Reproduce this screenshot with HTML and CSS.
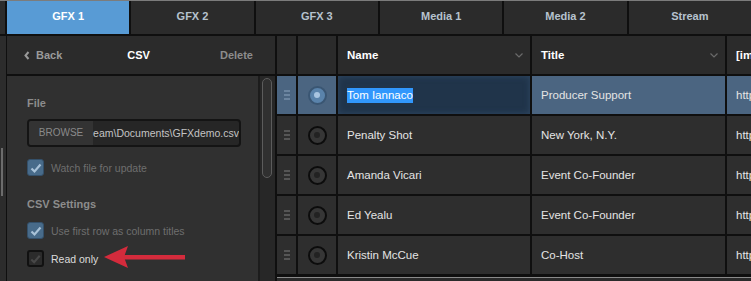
FILE: index.html
```html
<!DOCTYPE html>
<html lang="en">
<head>
    <meta charset="UTF-8">
    <meta name="viewport" content="width=device-width, initial-scale=1.0">
    <title>GFX - CSV</title>
    <link rel="stylesheet" href="styles.css">
</head>
<body>
    <div class="tabs">
        <div class="tab-strip"></div>
        <div class="tab active">GFX 1</div>
        <div class="tab">GFX 2</div>
        <div class="tab">GFX 3</div>
        <div class="tab">Media 1</div>
        <div class="tab">Media 2</div>
        <div class="tab">Stream</div>
    </div>

    <div class="main">
        <div class="strip"><div class="grip"></div></div>

        <div class="side">
            <div class="side-head">
                <span class="back">
                    <svg width="6" height="9" viewBox="0 0 6 9"><polyline points="4.5,1 1.5,4.5 4.5,8" fill="none" stroke="#9a9a9a" stroke-width="2"/></svg>
                    Back
                </span>
                <span class="head-title">CSV</span>
                <span class="delete">Delete</span>
            </div>
            <div class="side-body">
                <div class="form">
                    <div class="label">File</div>
                    <div class="file">
                        <span class="browse">BROWSE</span>
                        <span class="path">eam\Documents\GFXdemo.csv</span>
                    </div>
                    <div class="check disabled">
                        <span class="box on"><svg width="14" height="14" viewBox="0 0 14 14"><polyline points="2.5,7.5 5.5,10.5 11.5,3.5" fill="none" stroke="#a9c2d8" stroke-width="2.2"/></svg></span>
                        Watch file for update
                    </div>

                    <div class="label section">CSV Settings</div>
                    <div class="check disabled">
                        <span class="box on"><svg width="14" height="14" viewBox="0 0 14 14"><polyline points="2.5,7.5 5.5,10.5 11.5,3.5" fill="none" stroke="#a9c2d8" stroke-width="2.2"/></svg></span>
                        Use first row as column titles
                    </div>
                    <div class="check">
                        <span class="box off"><svg width="14" height="14" viewBox="0 0 14 14"><polyline points="2.5,7.5 5.5,10.5 11.5,3.5" fill="none" stroke="#484848" stroke-width="2.2"/></svg></span>
                        Read only
                    </div>

                    <!-- annotation arrow -->
                    <svg class="arrow" width="84" height="24" viewBox="0 0 84 24">
                        <rect x="20" y="10" width="62" height="4.5" fill="#d42b3c"/>
                        <polygon points="1,12 25,1 21,12 25,23" fill="#d42b3c"/>
                    </svg>
                </div>
                <div class="scroll"><div class="thumb"></div></div>
            </div>
        </div>

        <div class="table-wrap">
            <div class="grid">
                <div class="cell head"></div>
                <div class="cell head"></div>
                <div class="cell head text">Name <svg class="chev" width="8" height="5" viewBox="0 0 8 5"><polyline points="0.5,0.5 4,4 7.5,0.5" fill="none" stroke="#6a6a6a" stroke-width="1.2"/></svg></div>
                <div class="cell head text">Title <svg class="chev" width="8" height="5" viewBox="0 0 8 5"><polyline points="0.5,0.5 4,4 7.5,0.5" fill="none" stroke="#6a6a6a" stroke-width="1.2"/></svg></div>
                <div class="cell head text">[image]</div>

                <div class="cell sel"><span class="drag"></span></div>
                <div class="cell sel"><span class="radio on"></span></div>
                <div class="cell edit text"><span class="picked">Tom Iannaco</span></div>
                <div class="cell sel text">Producer Support</div>
                <div class="cell sel text">http://</div>

                <div class="cell"><span class="drag"></span></div>
                <div class="cell"><span class="radio"></span></div>
                <div class="cell text">Penalty Shot</div>
                <div class="cell text">New York, N.Y.</div>
                <div class="cell text">http://</div>

                <div class="cell"><span class="drag"></span></div>
                <div class="cell"><span class="radio"></span></div>
                <div class="cell text">Amanda Vicari</div>
                <div class="cell text">Event Co-Founder</div>
                <div class="cell text">http://</div>

                <div class="cell"><span class="drag"></span></div>
                <div class="cell"><span class="radio"></span></div>
                <div class="cell text">Ed Yealu</div>
                <div class="cell text">Event Co-Founder</div>
                <div class="cell text">http://</div>

                <div class="cell"><span class="drag"></span></div>
                <div class="cell"><span class="radio"></span></div>
                <div class="cell text">Kristin McCue</div>
                <div class="cell text">Co-Host</div>
                <div class="cell text">http://</div>
            </div>
            <div class="foot"></div>
        </div>
    </div>
</body>
</html>
```

FILE: styles.css
```css
body {
    margin: 0;
    height: 281px;
    overflow: hidden;
    background-color: #0f0f0f;
    font-family: "Liberation Sans", Arial, sans-serif;
}
.tabs {
    display: flex;
    gap: 2px;
    height: 33px;
    border-top: 1px solid #7c7c7c;
}
.tab-strip {
    width: 5px;
    background-color: #2c2c2c;
}
.tab {
    flex: 1;
    background-color: #2b2b2b;
    color: #b6c2ce;
    font-size: 11px;
    font-weight: bold;
    text-align: center;
    line-height: 31px;
}
.tab.active {
    background-color: #589bd5;
    color: #ffffff;
}
.main {
    display: flex;
    margin-top: 2px;
    height: 245px;
}
.strip {
    width: 6px;
    background-color: #2c2c2c;
}
.grip {
    width: 2px;
    height: 48px;
    margin: 112px 0 0 1px;
    background-color: #6c6c6c;
}
.side {
    width: 268px;
    margin-left: 1px;
    display: flex;
    flex-direction: column;
    gap: 2px;
}
.side-head {
    height: 38px;
    display: grid;
    grid-template-columns: 1fr auto 1fr;
    align-items: center;
    padding: 0 22px 0 17px;
    background-color: #2b2b2b;
    font-size: 11px;
    font-weight: bold;
}
.back {
    display: flex;
    align-items: center;
    gap: 6px;
    color: #9a9a9a;
}
.head-title {
    color: #ffffff;
}
.delete {
    color: #8c8c8c;
    text-align: right;
}
.side-body {
    flex: 1;
    display: flex;
}
.form {
    position: relative;
    width: 231px;
    padding: 20px 0 0 20px;
    background-color: #303030;
}
.label {
    font-size: 11px;
    font-weight: bold;
    color: #8c8c8c;
    line-height: 14px;
}
.label.section {
    margin-top: 21px;
}
.file {
    display: flex;
    width: 210px;
    height: 24px;
    margin-top: 9px;
    border: 2px solid #141414;
    border-radius: 4px;
    background-color: #262626;
    overflow: hidden;
}
.browse {
    width: 69px;
    background-color: #333333;
    color: #8a8a8a;
    font-size: 10px;
    line-height: 24px;
    text-align: center;
}
.path {
    color: #c4c4c4;
    font-size: 10.5px;
    line-height: 24px;
    white-space: nowrap;
}
.check {
    display: flex;
    align-items: center;
    gap: 7px;
    margin-top: 11px;
    height: 17px;
    font-size: 10.5px;
    color: #dcdcdc;
}
.check.disabled {
    color: #6e6e6e;
}
.file + .check {
    margin-top: 12px;
}
.box {
    box-sizing: border-box;
    width: 17px;
    height: 17px;
    border-radius: 3px;
    display: flex;
    align-items: center;
    justify-content: center;
}
.box.on {
    background-color: #486b8a;
    border: 1px solid #34506a;
}
.box.off {
    background-color: #2b2b2b;
    border: 2px solid #111111;
}
.arrow {
    position: absolute;
    left: 96px;
    top: 169px;
}
.scroll {
    flex: 1;
    background-color: #272727;
    border-left: 2px solid #1c1c1c;
    padding: 2px 0 0 2px;
}
.thumb {
    box-sizing: border-box;
    width: 10px;
    height: 100px;
    border: 1px solid #5c5c5c;
    border-radius: 5px;
    background-color: #303030;
}
.table-wrap {
    flex: 1;
    margin-left: 2px;
    display: flex;
    flex-direction: column;
}
.grid {
    display: grid;
    grid-template-columns: 19px 38px 192px 193px 1fr;
    grid-auto-rows: 38px;
    gap: 2px;
    padding-bottom: 3px;
}
.cell {
    display: flex;
    align-items: center;
    justify-content: center;
    background-color: #2e2e2e;
    overflow: hidden;
}
.cell.text {
    justify-content: flex-start;
    padding-left: 9px;
    font-size: 11.5px;
    color: #e4e4e4;
    white-space: nowrap;
}
.cell.head {
    background-color: #2b2b2b;
}
.cell.head.text {
    justify-content: space-between;
    padding-right: 7px;
    font-size: 11.5px;
    font-weight: bold;
    color: #ffffff;
}
.cell.sel {
    background-color: #4b6581;
}
.cell.edit {
    background-color: #20344a;
    box-shadow: inset 0 0 6px #2f4863;
}
.picked {
    background-color: #3197fc;
    color: #ffffff;
    line-height: 15px;
}
.drag {
    width: 6px;
    height: 2px;
    background-color: #555555;
    box-shadow: 0 -4px 0 #555555, 0 4px 0 #555555;
}
.sel .drag {
    background-color: #6c85a0;
    box-shadow: 0 -4px 0 #6c85a0, 0 4px 0 #6c85a0;
}
.radio {
    box-sizing: border-box;
    width: 19px;
    height: 19px;
    border: 2px solid #0c0c0c;
    border-radius: 50%;
    background-color: #363636;
    display: flex;
    align-items: center;
    justify-content: center;
}
.radio::after {
    content: "";
    width: 6px;
    height: 6px;
    border-radius: 50%;
    background-color: #222222;
}
.radio.on {
    border-color: #3a5673;
    background-color: #5a83ab;
}
.radio.on::after {
    background-color: #a9c5e1;
}
.foot {
    flex: 1;
    border-top: 1px solid #8a8a8a;
    background-color: #2a2a2a;
}
```
